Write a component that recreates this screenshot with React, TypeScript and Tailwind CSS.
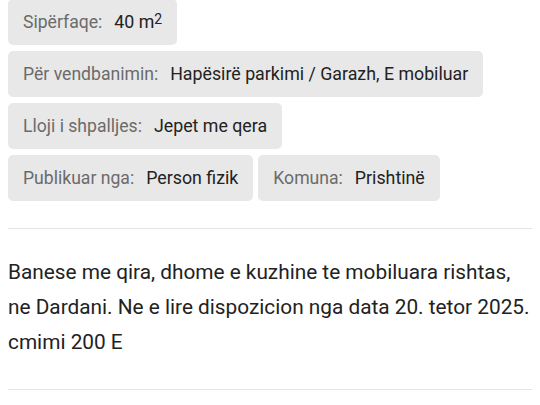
const chips: { label: string; value: React.ReactNode }[][] = [
  [{ label: "Sipërfaqe:", value: <>40 m<sup className="relative -top-[4px] text-[14px]">2</sup></> }],
  [{ label: "Për vendbanimin:", value: "Hapësirë parkimi / Garazh, E mobiluar" }],
  [{ label: "Lloji i shpalljes:", value: "Jepet me qera" }],
  [
    { label: "Publikuar nga:", value: "Person fizik" },
    { label: "Komuna:", value: "Prishtinë" },
  ],
];

export default function App() {
  return (
    <div className="min-h-[405px] overflow-hidden bg-white px-2 font-['Roboto',sans-serif]">
      <div className="-mt-px flex flex-col gap-[6px]">
        {chips.map((row, i) => (
          <div key={i} className="flex gap-[5px]">
            {row.map((c) => (
              <div
                key={c.label}
                className="flex h-[46px] items-center gap-[12px] rounded-[5px] bg-[#e8e8e8] px-[15px] text-[17.6px]"
              >
                <span className="text-[#6b6b6b]">{c.label}</span>
                <span className="text-[17.8px] text-[#222]">{c.value}</span>
              </div>
            ))}
          </div>
        ))}
      </div>
      <div className="mt-[27px] border-t border-[#e4e4e4]" />
      <p className="mt-[26px] text-[20.8px] leading-[35px] text-[#222]">
        Banese me qira, dhome e kuzhine te mobiluara rishtas, ne Dardani. Ne e lire dispozicion nga data 20. tetor
        2025.
        <br />
        cmimi 200 E
      </p>
      <div className="mt-[29px] border-t border-[#e4e4e4]" />
    </div>
  );
}
